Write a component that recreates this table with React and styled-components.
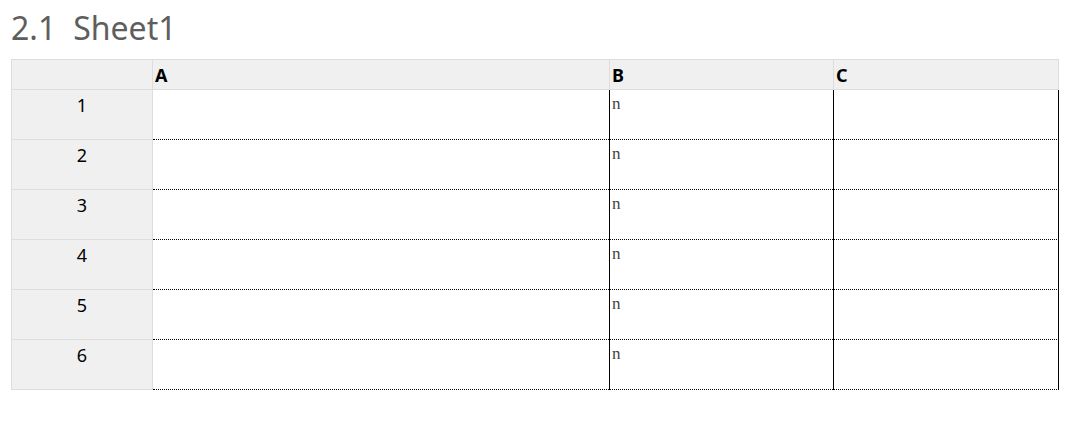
import React from "react";
import styled, { createGlobalStyle } from "styled-components";

const Global = createGlobalStyle`
  html, body { margin: 0; padding: 0; background: #fff; }
  body { font-family: "Noto Sans", "Open Sans", sans-serif; }
`;

const Page = styled.div`
  padding: 9px 11px 0 11px;
`;

const Title = styled.h2`
  margin: 0 0 12px 0;
  font-size: 32px;
  font-weight: 400;
  line-height: 38px;
  color: #5e5e5e;
  display: flex;
  gap: 17px;
`;

const Grid = styled.div`
  display: grid;
  grid-template-columns: 142px 456px 224px 226px;
  grid-auto-rows: 50px;
  grid-template-rows: 31px;
  width: 1048px;
`;

const Corner = styled.div`
  box-sizing: border-box;
  background: #f0f0f0;
  border: 1px solid #dddddd;
`;

const HeadCell = styled.div`
  box-sizing: border-box;
  background: #f0f0f0;
  border-top: 1px solid #dddddd;
  border-bottom: 1px solid #dddddd;
  border-left: ${(p) => (p.$first ? "none" : "1px solid #dddddd")};
  border-right: ${(p) => (p.$last ? "1px solid #dddddd" : "none")};
  padding: 0 2px;
  display: flex;
  align-items: center;
  font-size: 18px;
  line-height: 22px;
  font-weight: 700;
  color: #000;
`;

const RowHead = styled.div`
  box-sizing: border-box;
  background: #f0f0f0;
  border-left: 1px solid #dddddd;
  border-right: 1px solid #dddddd;
  border-bottom: 1px solid #dddddd;
  padding-top: 4px;
  text-align: center;
  font-size: 18px;
  line-height: 22px;
  color: #000;
`;

const Cell = styled.div`
  box-sizing: border-box;
  border-bottom: 1px dotted #000;
  border-left: ${(p) => (p.$edge ? "1px solid #000" : "none")};
  border-right: ${(p) => (p.$last ? "1px solid #000" : "none")};
  padding: 4px 2px 0 2px;
  font-family: "Liberation Serif", serif;
  font-size: 17px;
  line-height: 20px;
  color: #444;
`;

const rows = [1, 2, 3, 4, 5, 6];

export default function App() {
  return (
    <Page>
      <Global />
      <Title>
        <span>2.1</span>
        <span>Sheet1</span>
      </Title>
      <Grid>
        <Corner />
        <HeadCell $first>A</HeadCell>
        <HeadCell>B</HeadCell>
        <HeadCell $last>C</HeadCell>
        {rows.map((r) => (
          <React.Fragment key={r}>
            <RowHead>{r}</RowHead>
            <Cell />
            <Cell $edge>n</Cell>
            <Cell $edge $last />
          </React.Fragment>
        ))}
      </Grid>
    </Page>
  );
}
